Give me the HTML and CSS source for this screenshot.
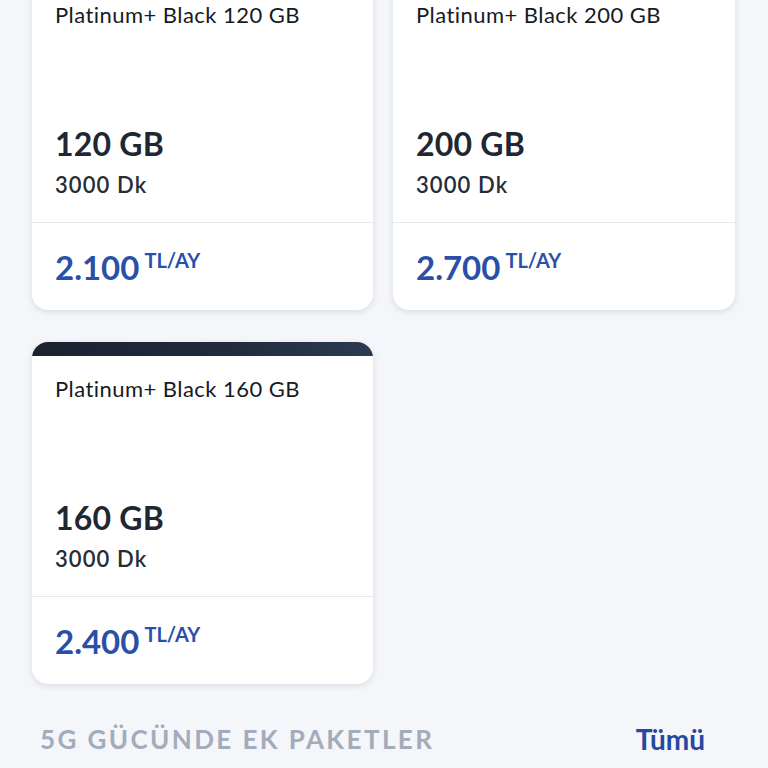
FILE: index.html
```html
<!DOCTYPE html>
<html lang="tr">
<head>
<meta charset="utf-8">
<title>Paketler</title>
<link rel="stylesheet" href="styles.css">
</head>
<body>
<div class="page">
  <div class="grid">
    <div class="card">
      <div class="stripe"></div>
      <div class="top">
        <div class="name">Platinum+ Black 120 GB</div>
        <div class="specs">
          <div class="data">120 GB</div>
          <div class="mins">3000 Dk</div>
        </div>
      </div>
      <div class="bottom"><span class="price">2.100</span><span class="unit">TL/AY</span></div>
    </div>
    <div class="card">
      <div class="stripe"></div>
      <div class="top">
        <div class="name">Platinum+ Black 200 GB</div>
        <div class="specs">
          <div class="data">200 GB</div>
          <div class="mins">3000 Dk</div>
        </div>
      </div>
      <div class="bottom"><span class="price">2.700</span><span class="unit">TL/AY</span></div>
    </div>
    <div class="card">
      <div class="stripe"></div>
      <div class="top">
        <div class="name">Platinum+ Black 160 GB</div>
        <div class="specs">
          <div class="data">160 GB</div>
          <div class="mins">3000 Dk</div>
        </div>
      </div>
      <div class="bottom"><span class="price">2.400</span><span class="unit">TL/AY</span></div>
    </div>
  </div>
  <div class="section-head">
    <span class="section-title">5G GÜCÜNDE EK PAKETLER</span>
    <span class="section-link">Tümü</span>
  </div>
</div>
</body>
</html>
```

FILE: styles.css
```css
html, body {
  margin: 0;
  padding: 0;
  background: #f4f6f9;
  font-family: "Lato", "Noto Sans", sans-serif;
  color: #1b2330;
  overflow: hidden;
}

.page {
  padding: 0 33px 0 32px;
}

.grid {
  display: grid;
  grid-template-columns: 341px 342px;
  column-gap: 20px;
  row-gap: 32px;
  margin-top: -32px;
}

.card {
  height: 342px;
  background: #ffffff;
  border-radius: 16px;
  box-shadow: 0 2px 6px rgba(30, 40, 60, 0.12);
  display: flex;
  flex-direction: column;
  overflow: hidden;
}

.stripe {
  height: 14px;
  flex: none;
  background: linear-gradient(90deg, #1b2230 0%, #222c3d 60%, #2b3b53 100%);
}

.top {
  height: 241px;
  box-sizing: border-box;
  padding: 20px 23px 24px;
  display: flex;
  flex-direction: column;
  justify-content: space-between;
  border-bottom: 1px solid #e6e9ee;
}

.name {
  font-size: 22px;
  line-height: 1.2;
  font-weight: 400;
  letter-spacing: 0.45px;
  color: #161b24;
}

.data {
  font-size: 32px;
  line-height: 1.2;
  font-weight: 700;
  letter-spacing: 0.2px;
  color: #1f2733;
  margin-bottom: 8px;
}

.mins {
  font-size: 22px;
  line-height: 1.2;
  font-weight: 600;
  letter-spacing: 1.1px;
  color: #262d38;
}

.bottom {
  padding: 25px 23px 0;
  display: flex;
  align-items: flex-start;
}

.price {
  font-size: 33px;
  line-height: 1.2;
  font-weight: 700;
  color: #2a4fa8;
}

.unit {
  font-size: 20px;
  line-height: 1.2;
  font-weight: 700;
  color: #2a4fa8;
  margin-left: 5px;
  margin-top: 0;
}

.section-head {
  display: flex;
  justify-content: space-between;
  align-items: center;
  padding: 38px 30px 0 8px;
}

.section-title {
  font-size: 26px;
  font-weight: 700;
  letter-spacing: 2.4px;
  color: #a3acbc;
}

.section-link {
  font-size: 28px;
  font-weight: 700;
  color: #2747a0;
}
```
